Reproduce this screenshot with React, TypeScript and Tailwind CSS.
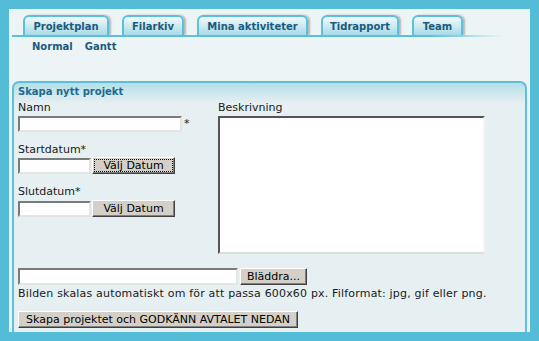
import React from "react";

const tabs = [
  { label: "Projektplan", w: "w-[86px]" },
  { label: "Filarkiv", w: "w-[62px]" },
  { label: "Mina aktiviteter", w: "w-[111px]" },
  { label: "Tidrapport", w: "w-[78px]" },
  { label: "Team", w: "w-[51px]" },
];

function Tab({ label, w }: { label: string; w: string }) {
  return (
    <div
      className={`${w} h-[20px] flex items-center justify-center rounded-t-[6px] border-2 border-b-0 border-[#5cc0da] bg-[linear-gradient(to_bottom,#f2f9fb,#a6dbe8)] shadow-[2px_0_2px_rgba(0,0,0,0.25)] text-[10px] font-bold text-[#1c5a7c]`}
    >
      {label}
    </div>
  );
}

function Btn({ children, w, focus }: { children: React.ReactNode; w: string; focus?: boolean }) {
  return (
    <button
      className={`${w} h-[17px] p-[1px] bg-[#d4d0c8] border border-t-white border-l-white border-r-[#404040] border-b-[#404040] shadow-[inset_-1px_-1px_0_#808080] text-[11px] leading-none text-black`}
    >
      <span
        className={`flex h-full w-full items-center justify-center ${
          focus ? "border border-dotted border-black" : "border border-transparent"
        }`}
      >
        {children}
      </span>
    </button>
  );
}

const field =
  "h-[16px] bg-white border-2 border-t-[#7a7a7a] border-l-[#7a7a7a] border-b-[#e4e4e4] border-r-[#e4e4e4] outline-none";

export default function App() {
  return (
    <div className="w-[539px] h-[341px] overflow-hidden bg-[#55bcd7] p-[9px] font-['DejaVu_Sans',Verdana,sans-serif]">
      <div className="flex h-full flex-col overflow-hidden bg-[#edf4f6] px-[3px] pt-[6px]">
        <div className="flex gap-[13px] pl-[11px]">
          {tabs.map((t) => (
            <Tab key={t.label} {...t} />
          ))}
        </div>
        <div className="h-[2px] w-[491px] bg-[linear-gradient(to_right,#5cc0da_85%,transparent)]" />

        <div className="mt-[3px] flex gap-[12px] pl-[20px] text-[10px] leading-[14px] font-bold text-[#1c5a7c]">
          <span>Normal</span>
          <span>Gantt</span>
        </div>

        <div className="mt-[27px] flex-1 rounded-t-[7px] border-2 border-b-0 border-[#5cc0da] bg-[linear-gradient(to_bottom,#b3dfea,#e6eff1_20px)] pl-[4px] pt-[2px] text-[11px] leading-[14px] text-[#1a1a1a]">
          <div className="text-[10px] font-bold text-[#1d6a8c]">Skapa nytt projekt</div>

          <div className="flex">
            <div className="w-[200px]">
              <div className="mt-[2px]">Namn</div>
              <div className="mt-[1px] flex items-center gap-[2px]">
                <input type="text" className={`${field} w-[164px]`} />
                <span>*</span>
              </div>
              <div className="mt-[11px]">Startdatum*</div>
              <div className="flex items-center gap-[1px]">
                <input type="text" className={`${field} w-[73px]`} />
                <Btn w="w-[83px]" focus>
                  Välj Datum
                </Btn>
              </div>
              <div className="mt-[11px]">Slutdatum*</div>
              <div className="mt-[1px] flex items-center gap-[1px]">
                <input type="text" className={`${field} w-[73px]`} />
                <Btn w="w-[83px]">Välj Datum</Btn>
              </div>
            </div>

            <div>
              <div className="mt-[2px]">Beskrivning</div>
              <textarea
                readOnly
                className="mt-[1px] block h-[138px] w-[267px] resize-none bg-white border-2 border-t-[#555] border-l-[#555] border-b-[#dcdcdc] border-r-[#f4f4f4] outline-none"
              />
            </div>
          </div>

          <div className="mt-[14px] flex items-center gap-[2px]">
            <input type="text" className={`${field} h-[17px] w-[220px]`} />
            <Btn w="w-[67px]">Bläddra...</Btn>
          </div>
          <div className="mt-[2px] tracking-[0.18px]">
            Bilden skalas automatiskt om för att passa 600x60 px. Filformat: jpg, gif eller png.
          </div>
          <div className="mt-[10px]">
            <Btn w="w-[280px]">Skapa projektet och GODKÄNN AVTALET NEDAN</Btn>
          </div>
        </div>
      </div>
    </div>
  );
}
